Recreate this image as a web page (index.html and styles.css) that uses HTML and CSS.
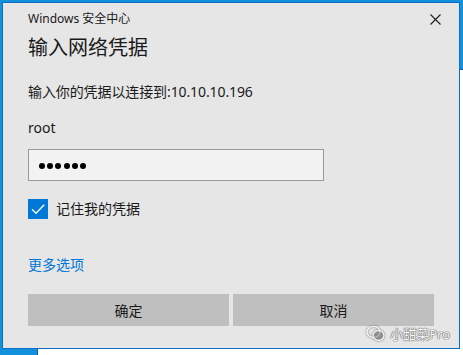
FILE: index.html
```html
<!DOCTYPE html>
<html lang="zh-CN">
<head>
  <meta charset="UTF-8">
  <title>Windows 安全中心</title>
  <link rel="stylesheet" href="styles.css">
</head>
<body>
  <div class="desktop">
    <div class="back-window"></div>

    <div class="dialog">
      <div class="dialog-header">
        <span class="app-name">Windows 安全中心</span>
        <svg class="close" width="11" height="11" viewBox="0 0 11 11">
          <path d="M0.5 0.5 L10.5 10.5 M10.5 0.5 L0.5 10.5" stroke="#1f1f1f" stroke-width="1.1" fill="none"/>
        </svg>
      </div>

      <h1 class="dialog-title">输入网络凭据</h1>
      <p class="dialog-desc">输入你的凭据以连接到:10.10.10.196</p>

      <p class="user-name">root</p>

      <div class="password-box">
        <span class="dot"></span><span class="dot"></span><span class="dot"></span>
        <span class="dot"></span><span class="dot"></span><span class="dot"></span>
      </div>

      <label class="remember">
        <span class="checkbox">
          <svg width="20" height="20" viewBox="0 0 20 20">
            <path d="M4 10.2 L8 14.2 L16.2 5.8" stroke="#ffffff" stroke-width="1.4" fill="none"/>
          </svg>
        </span>
        <span class="remember-text">记住我的凭据</span>
      </label>

      <a class="more-link" href="#">更多选项</a>

      <div class="btn-row">
        <button class="btn">确定</button>
        <button class="btn">取消</button>
      </div>

      <div class="watermark">
        <svg width="20" height="17" viewBox="0 0 20 17">
          <ellipse cx="7.5" cy="7" rx="6.5" ry="5.5" stroke="#ffffff" stroke-width="1.2" fill="none"/>
          <ellipse cx="12.5" cy="10.5" rx="5.5" ry="4.8" stroke="#ffffff" stroke-width="1.2" fill="rgba(150,150,150,0.6)"/>
        </svg>
        <span>小甜菜Pro</span>
      </div>
    </div>
  </div>
</body>
</html>
```

FILE: styles.css
```css
:root {
  --desktop-blue: #1391dd;
  --dialog-border: #0d6fc4;
  --dialog-bg: #e6e6e6;
  --text: #1a1a1a;
  --accent: #0078d7;
  --btn-bg: #bfbfbf;
  --input-bg: #f2f2f2;
  --input-border: #999999;
}

* {
  margin: 0;
  padding: 0;
  box-sizing: border-box;
}

body {
  font-family: "Segoe UI", "Noto Sans", "Noto Sans CJK SC", sans-serif;
  color: var(--text);
  background: var(--desktop-blue);
  width: 463px;
  height: 355px;
  overflow: hidden;
}

.desktop {
  position: relative;
  width: 463px;
  height: 355px;
  padding: 2px 0 0 2px;
  overflow: hidden;
}

/* window peeking out behind the dialog */
.back-window {
  position: absolute;
  left: 37px;
  top: 69px;
  width: 426px;
  height: 286px;
  background: #ffffff;
  border-top: 1px solid #0b5ea8;
  border-left: 1px solid #0b5ea8;
}

.dialog {
  position: relative;
  width: 458px;
  height: 347px;
  background: var(--dialog-bg);
  border: 1px solid var(--dialog-border);
  padding: 6px 18px 0 25px;
}

.dialog-header {
  display: flex;
  justify-content: space-between;
  align-items: center;
  height: 20px;
}

.app-name {
  font-size: 12px;
  line-height: 20px;
}

.close {
  display: block;
}

.dialog-title {
  font-size: 20px;
  font-weight: 400;
  line-height: 28px;
  margin-top: 5px;
}

.dialog-desc {
  font-size: 14px;
  line-height: 20px;
  margin-top: 20px;
  letter-spacing: -0.1px;
}

.user-name {
  font-size: 14px;
  line-height: 20px;
  margin-top: 16px;
}

.password-box {
  display: flex;
  align-items: center;
  gap: 2.2px;
  width: 296px;
  height: 32px;
  margin-top: 11px;
  padding: 2px 0 0 10px;
  background: var(--input-bg);
  border: 1px solid var(--input-border);
}

.dot {
  width: 6px;
  height: 6px;
  border-radius: 50%;
  background: #000000;
}

.remember {
  display: flex;
  align-items: center;
  gap: 8px;
  margin-top: 18px;
  height: 20px;
}

.checkbox {
  display: block;
  width: 20px;
  height: 20px;
  background: var(--accent);
}

.checkbox svg {
  display: block;
}

.remember-text {
  font-size: 14px;
  line-height: 20px;
}

.more-link {
  display: block;
  width: fit-content;
  font-size: 14px;
  line-height: 20px;
  margin-top: 36px;
  color: var(--accent);
  text-decoration: none;
}

.btn-row {
  display: flex;
  gap: 4px;
  width: 406px;
  margin-top: 19px;
}

.btn {
  flex: 1;
  height: 32px;
  border: none;
  background: var(--btn-bg);
  font-family: inherit;
  font-size: 14px;
  color: var(--text);
}

.watermark {
  position: absolute;
  right: 9px;
  bottom: 5px;
  display: flex;
  align-items: center;
  gap: 4px;
  font-size: 13px;
  color: #ffffff;
  text-shadow: 0 0 1px #555, 0 0 1px #555, 0 0 1px #555;
}

.watermark svg {
  filter: drop-shadow(0 0 1px #555);
}
```
